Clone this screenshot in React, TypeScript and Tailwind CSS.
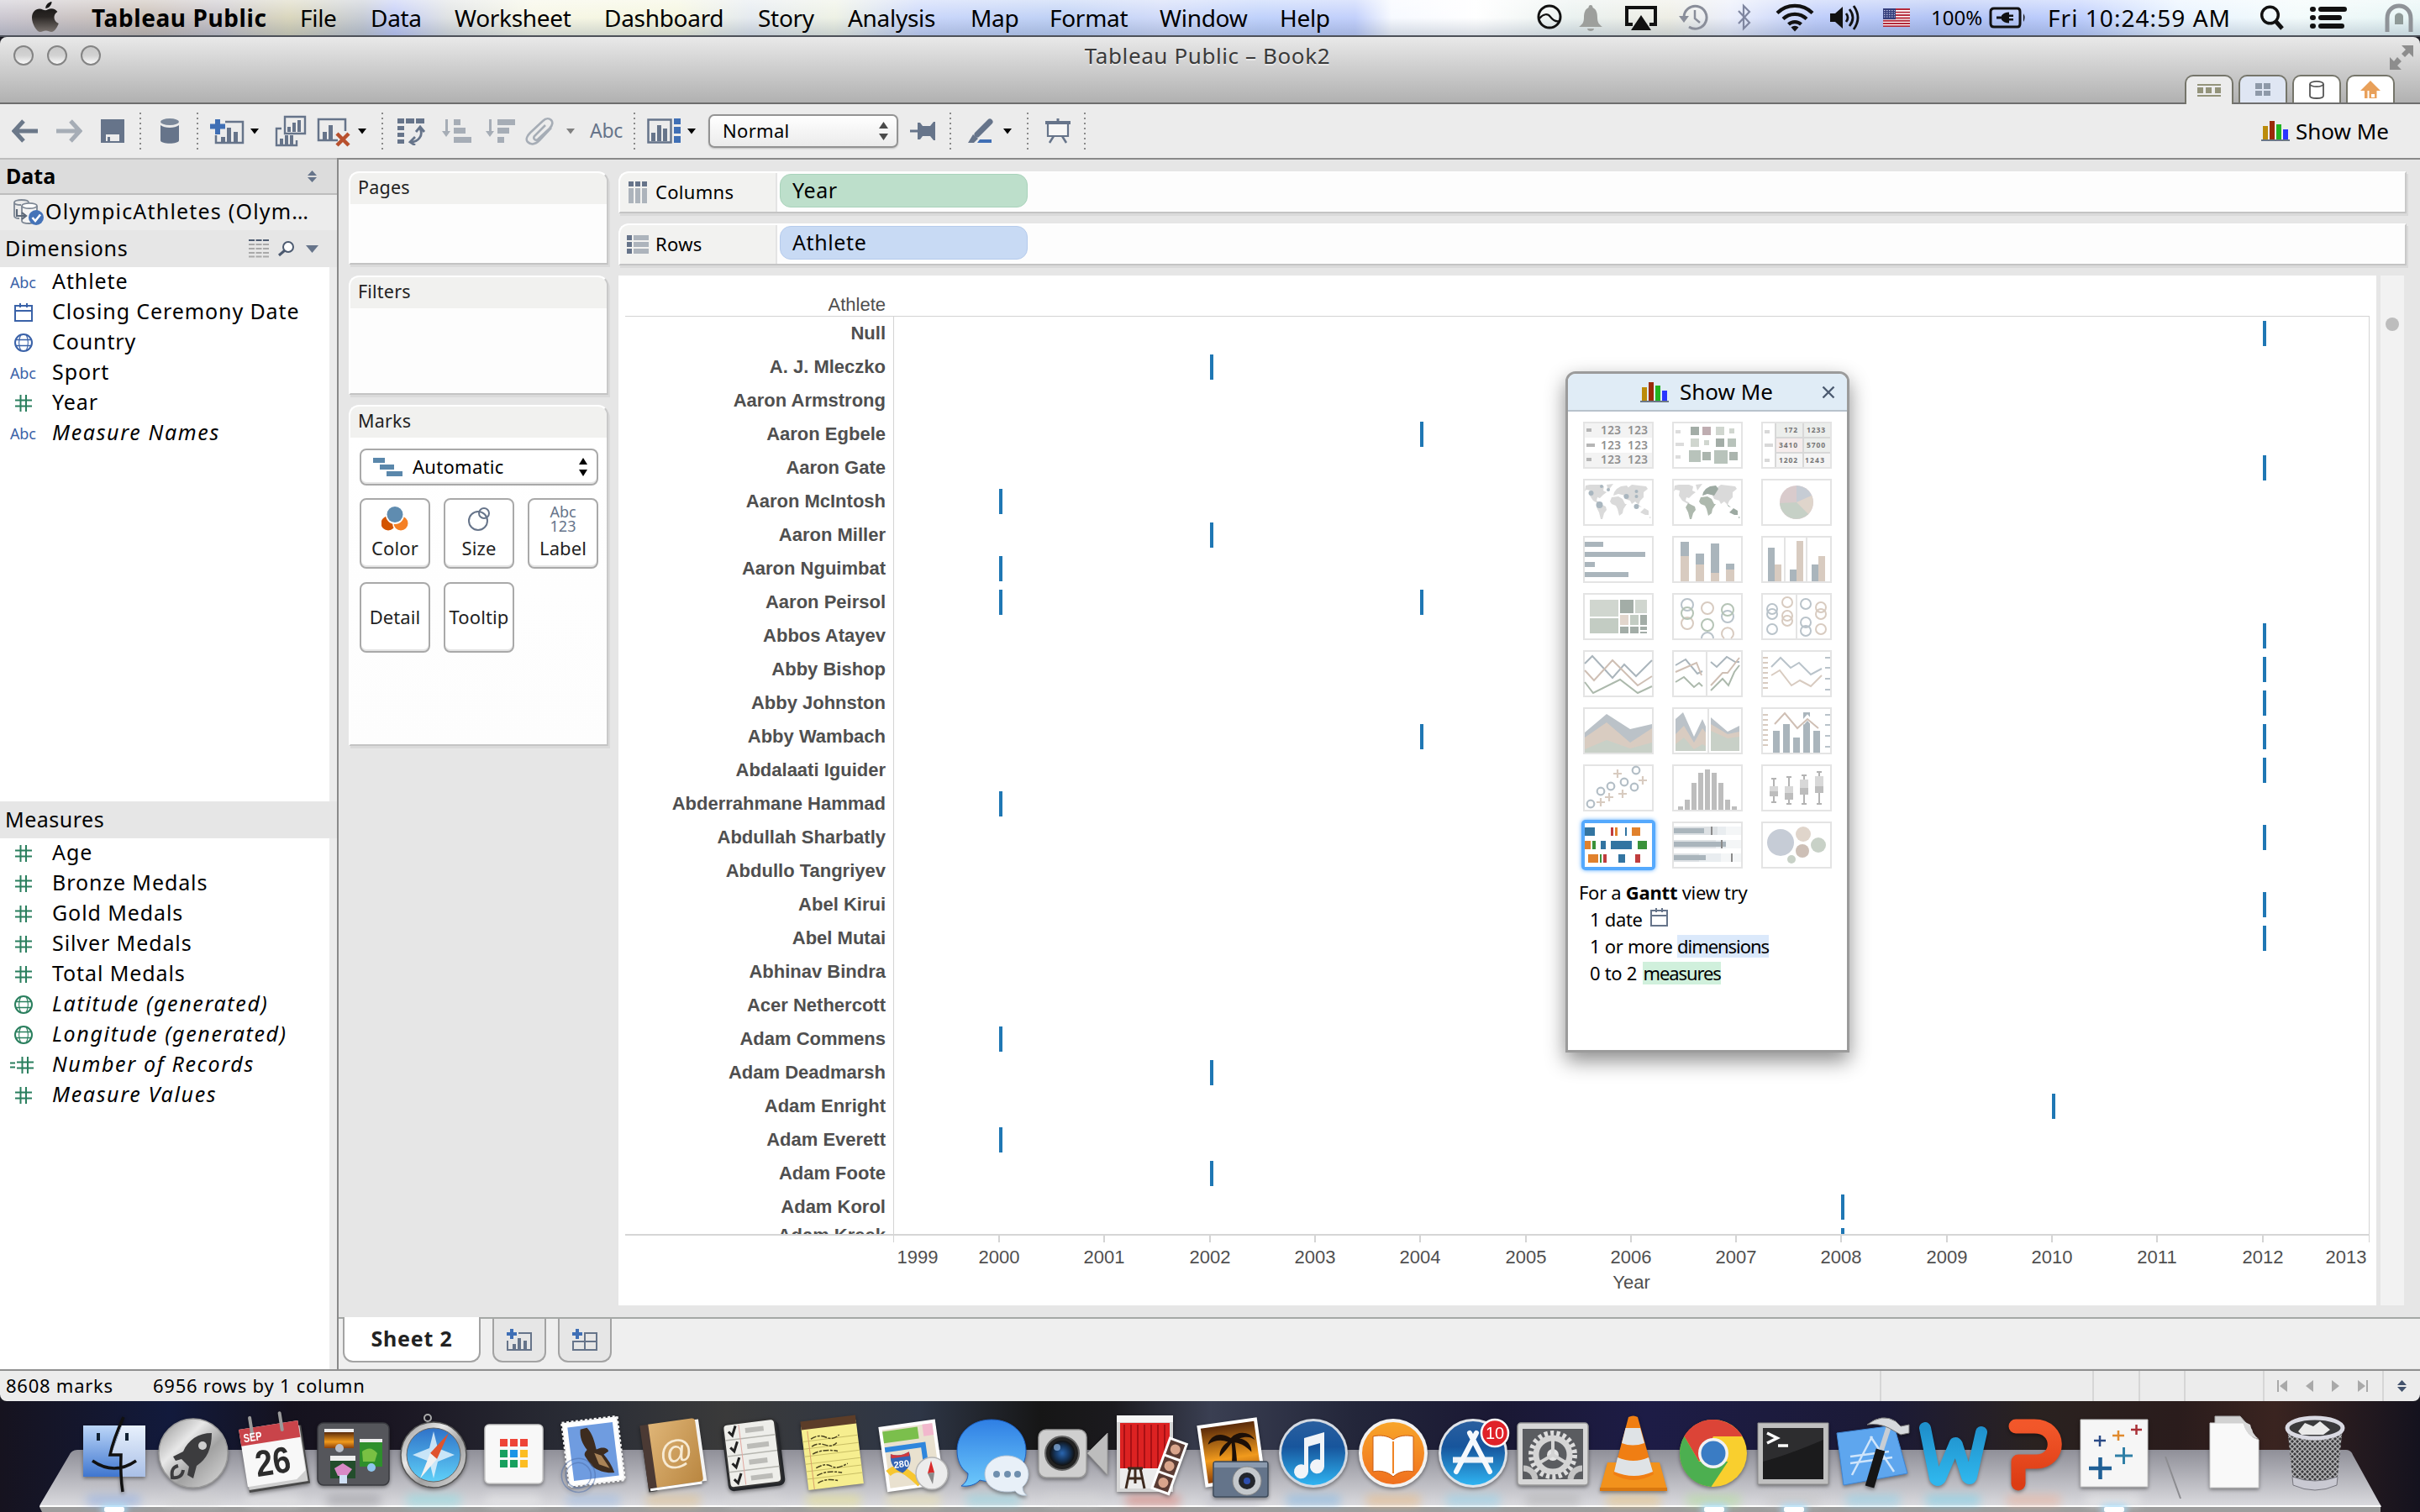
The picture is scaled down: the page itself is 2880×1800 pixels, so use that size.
import React from "react";

/* ------------------------------------------------------------------ data */

const athletes: { name: string; years: number[] }[] = [
  { name: "Null", years: [2012] },
  { name: "A. J. Mleczko", years: [2002] },
  { name: "Aaron Armstrong", years: [] },
  { name: "Aaron Egbele", years: [2004] },
  { name: "Aaron Gate", years: [2012] },
  { name: "Aaron McIntosh", years: [2000] },
  { name: "Aaron Miller", years: [2002] },
  { name: "Aaron Nguimbat", years: [2000] },
  { name: "Aaron Peirsol", years: [2000, 2004] },
  { name: "Abbos Atayev", years: [2012] },
  { name: "Abby Bishop", years: [2012] },
  { name: "Abby Johnston", years: [2012] },
  { name: "Abby Wambach", years: [2004, 2012] },
  { name: "Abdalaati Iguider", years: [2012] },
  { name: "Abderrahmane Hammad", years: [2000] },
  { name: "Abdullah Sharbatly", years: [2012] },
  { name: "Abdullo Tangriyev", years: [] },
  { name: "Abel Kirui", years: [2012] },
  { name: "Abel Mutai", years: [2012] },
  { name: "Abhinav Bindra", years: [] },
  { name: "Acer Nethercott", years: [] },
  { name: "Adam Commens", years: [2000] },
  { name: "Adam Deadmarsh", years: [2002] },
  { name: "Adam Enright", years: [2010] },
  { name: "Adam Everett", years: [2000] },
  { name: "Adam Foote", years: [2002] },
  { name: "Adam Korol", years: [2008] },
];

const yearOffset = (year: number) => Math.round(125 + (year - 2000) * 125.3);

/* ------------------------------------------------------------- menu bar */

const menus: { label: string; width: string }[] = [
  { label: "File", width: "w-[84px]" },
  { label: "Data", width: "w-[100px]" },
  { label: "Worksheet", width: "w-[178px]" },
  { label: "Dashboard", width: "w-[183px]" },
  { label: "Story", width: "w-[107px]" },
  { label: "Analysis", width: "w-[146px]" },
  { label: "Map", width: "w-[94px]" },
  { label: "Format", width: "w-[131px]" },
  { label: "Window", width: "w-[143px]" },
  { label: "Help", width: "w-[80px]" },
];

function MenuBar() {
  return (
    <div className="relative h-[44px] shrink-0 border-b-2 border-[#4c5058] bg-[linear-gradient(90deg,#c6c2cc_0%,#c4b8ae_6%,#c4c0c6_9%,#d6d2b6_12%,#c0c6d0_15%,#bcc6f6_16.3%,#dcdfe0_18.5%,#f6f6e4_22%,#f4f5dc_28%,#e2e8ee_31%,#ecf0e2_34.5%,#c4d2fa_38%,#b8ccf4_44%,#cbd6f8_48%,#b9cdfb_52%,#bccbfb_56%,#f6f9ff_57.5%,#ffffff_61%,#e8f0ee_65%,#ecece2_69%,#e8ecfa_71.5%,#b9c9fa_75%,#aabdf4_80%,#b7c9fd_86%,#e6f2ff_90%,#f2fbfb_95%,#e4f4f4_100%)]">
      <div className="flex h-[42px] items-center bg-gradient-to-b from-white/50 via-white/10 to-slate-500/25 text-[28px] tracking-[-0.3px] text-black">
        <svg className="ml-[37px] mb-[3px]" width="34" height="38" viewBox="0 0 34 38">
          <defs>
            <linearGradient id="apple" x1="0" y1="0" x2="0" y2="1">
              <stop offset="0" stopColor="#111" />
              <stop offset="0.5" stopColor="#2a2624" />
              <stop offset="1" stopColor="#79726e" />
            </linearGradient>
          </defs>
          <path
            fill="url(#apple)"
            d="M24.5 1c.3 3.600-3.200 8-7.200 8C16.800 5.600 20.600 1.300 24.500 1zM17 11.200c1.700 0 4-2 7.200-2 3 0 5.600 1.600 7.200 3.900-5.800 3.400-5 11.500 1.400 14-1.500 4-4.800 10-8.600 10-2.400 0-3.600-1.500-6.600-1.500s-4.300 1.500-6.500 1.500C6.500 37.100 1 27.300 1 20c0-6.800 4.400-10.600 9-10.600 3 0 5.200 1.800 7 1.800z"
          />
        </svg>
        <div className="ml-[38px] w-[248px] font-bold tracking-[0.6px]">Tableau Public</div>
        {menus.map((m) => (
          <div key={m.label} className={m.width}>
            {m.label}
          </div>
        ))}
        <svg className="ml-[226px]" width="30" height="34" viewBox="0 0 30 34">
          <circle cx="15" cy="16" r="13" fill="none" stroke="#111" strokeWidth="3" />
          <path d="M3 18C8 12 13 12 16 16s7 6 11 5" fill="none" stroke="#111" strokeWidth="2.200" />
        </svg>
        <svg className="ml-[20px]" width="28" height="34" viewBox="0 0 28 34">
          <path fill="#9d9f9c" d="M14 2c2 0 2.500 1.500 2.500 3C21 7 22 12 22 17c0 6 2 8 6 11H0c4-3 6-5 6-11 0-5 1-10 5.500-12 0-1.500.5-3 2.500-3zM10 30h8c0 4-8 4-8 0z" />
        </svg>
        <svg className="ml-[26px]" width="40" height="32" viewBox="0 0 40 32">
          <path fill="none" stroke="#111" strokeWidth="4" d="M10 24H3V4h34v20h-7" />
          <path fill="#111" d="M20 13l12 18H8z" />
        </svg>
        <svg className="ml-[25px]" width="36" height="34" viewBox="0 0 36 34">
          <path d="M6 17a13.500 13.500 0 1 1 6 11" fill="none" stroke="#8a8e9a" strokeWidth="3" />
          <path d="M0 15h12l-6 8z" fill="#8a8e9a" />
          <path d="M19 8v10l6 5" fill="none" stroke="#8a8e9a" strokeWidth="2.500" />
        </svg>
        <svg className="ml-[33px]" width="18" height="34" viewBox="0 0 18 34">
          <path d="M2 9l13 14-7 7V3l7 7L2 24" fill="none" stroke="#7f86a0" strokeWidth="2.200" />
        </svg>
        <svg className="ml-[28px]" width="46" height="34" viewBox="0 0 46 34">
          <g fill="none" stroke="#111" strokeWidth="4.200">
            <path d="M2 11.500a30 30 0 0 1 42 0" />
            <path d="M9 18.500a20 20 0 0 1 28 0" />
            <path d="M15.500 25a11 11 0 0 1 15 0" />
          </g>
          <path d="M18.500 28.500a6.500 6.500 0 0 1 9 0L23 33.500z" fill="#111" />
        </svg>
        <svg className="ml-[19px]" width="36" height="34" viewBox="0 0 36 34">
          <path d="M0 12h6l9-8v26l-9-8H0z" fill="#111" />
          <g fill="none" stroke="#111" strokeWidth="2.800">
            <path d="M19 12q4 5 0 10" />
            <path d="M23 7q8 10 0 20" />
            <path d="M28 3q10 14 0 28" />
          </g>
        </svg>
        <svg className="ml-[27px]" width="32" height="22" viewBox="0 0 32 22">
          <path fill="#fff" d="M0 0h32v22H0z" />
          <path stroke="#b52a3a" strokeWidth="1.900" d="M0 1h32M0 4.600h32M0 8h32M0 11.500h32M0 14.800h32M0 18h32M0 21.200h32" />
          <path fill="#353f7c" d="M0 0h15v13H0z" />
          <path stroke="#c8cce8" strokeWidth="1" strokeDasharray="1.500 1.500" d="M1 2.500h13M1 5h13M1 7.500h13M1 10h13" />
        </svg>
        <div className="ml-[25px] w-[69px] text-[24px] tracking-[0px]">100%</div>
        <svg width="44" height="26" viewBox="0 0 44 26">
          <path d="M34 2H6Q2 2 2 6v14q0 4 4 4h28q3 0 3-4V6q0-4-3-4z" fill="none" stroke="#111" strokeWidth="3" />
          <path d="M41 8q3 5 0 10z" fill="#111" />
          <path d="M9 11.500h6v-1q3-4 9-4v3h5v2.500h-5v2h5V16.500h-5v3q-6 0-9-4v-1H9z" fill="#111" />
        </svg>
        <div className="ml-[26px] w-[252px] whitespace-nowrap text-[28px] tracking-[1.05px]">Fri 10:24:59 AM</div>
        <svg width="32" height="32" viewBox="0 0 32 32">
          <circle cx="12.500" cy="13" r="9.800" fill="none" stroke="#111" strokeWidth="3.400" />
          <path d="M19 20l8 9" stroke="#111" strokeWidth="5" />
        </svg>
        <svg className="ml-[28px]" width="44" height="28" viewBox="0 0 44 28">
          <path d="M3 4h1M3 14h1M3 24h1" stroke="#111" strokeWidth="6" strokeLinecap="round" />
          <path d="M13 4h28M13 14h22M13 24h25" stroke="#111" strokeWidth="6" strokeLinecap="round" />
        </svg>
        <svg className="ml-[45px]" width="34" height="34" viewBox="0 0 34 34">
          <path d="M3 34V18C3 -2 31 -2 31 18v16" fill="none" stroke="#8f9398" strokeWidth="5" />
          <path d="M12 25V16c0-6 10-6 10 0v9z" fill="#8f9a98" />
        </svg>
      </div>
    </div>
  );
}

/* ------------------------------------------------------------ title bar */

function WindowTab({ active, tint, children }: { active?: boolean; tint?: boolean; children: React.ReactNode }) {
  return (
    <div
      className={
        "flex w-[58px] items-center justify-center rounded-t-[10px] border-2 border-b-0 border-[#75756a] " +
        (active ? "-mb-[2px] h-[35px] bg-[#ececec]" : tint ? "h-[33px] bg-[#dfe6f3]" : "h-[33px] bg-white")
      }
    >
      {children}
    </div>
  );
}

function TitleBar() {
  return (
    <div className="relative h-[80px] shrink-0 rounded-t-[8px] border-b-2 border-[#6e6e6e] bg-gradient-to-b from-[#e9e9e9] to-[#b1b1b1]">
      <div className="flex gap-4 pt-[10px] pl-[16px]">
        {[0, 1, 2].map((i) => (
          <div key={i} className="h-[24px] w-[24px] rounded-full border-2 border-[#848484] bg-gradient-to-b from-[#c9c9c9] via-[#d2d2d2] to-[#fafafa]" />
        ))}
      </div>
      <div className="absolute inset-x-0 top-[4px] text-center text-[26px] leading-[36px] tracking-[0.6px] text-[#3a3a3a] [text-shadow:0_2px_0_rgba(255,255,255,.5)]">
        <span className="relative -left-[3px]">Tableau Public – Book2</span>
      </div>
      <svg className="absolute top-[9px] right-[7px]" width="30" height="30" viewBox="0 0 30 30">
        <path fill="#8d8d8d" d="M15 1h14v14l-5-5-5 5-4-4 5-5zM1 15l5 5 4-5 5 5-5 5 5 5H1z" />
      </svg>
      <div className="absolute right-[30px] bottom-0 flex items-end gap-[6px]">
        <WindowTab active>
          <svg width="28" height="16" viewBox="0 0 28 16">
            <path fill="#93937a" d="M0 0h28v2H0zM0 4h7v7H0zM10 4h7v7h-7zM21 4h7v7h-7zM0 13h28v2H0z" />
          </svg>
        </WindowTab>
        <WindowTab tint>
          <svg width="18" height="16" viewBox="0 0 18 16">
            <path fill="#8e99a8" d="M0 0h8v7H0zM10 0h8v7h-8zM0 9h8v6H0zM10 9h8v6h-8z" />
          </svg>
        </WindowTab>
        <WindowTab>
          <svg width="20" height="24" viewBox="0 0 20 24">
            <path d="M2 5v14c0 4 16 4 16 0V5" fill="#fff" stroke="#555" strokeWidth="1.800" />
            <ellipse cx="10" cy="5" rx="8" ry="3.200" fill="#fff" stroke="#555" strokeWidth="1.800" />
          </svg>
        </WindowTab>
        <WindowTab>
          <svg width="24" height="22" viewBox="0 0 24 22">
            <path fill="#e8a05a" d="M12 0l12 12H0zM5 11h3.500v10H5zM10.500 11h9v10h-9z" />
            <path fill="#fff" d="M13 16h4v4h-4z" />
          </svg>
        </WindowTab>
      </div>
    </div>
  );
}

/* -------------------------------------------------------------- toolbar */

const Sep = ({ className }: { className: string }) => (
  <div className={"h-[44px] w-[2px] bg-[repeating-linear-gradient(180deg,#8a8a8a_0_2px,transparent_2px_6px)] " + className} />
);
const Down = ({ className, fill = "#000" }: { className: string; fill?: string }) => (
  <svg className={className} width="12" height="8" viewBox="0 0 12 8">
    <path d="M1 1h10L6 7.500z" fill={fill} />
  </svg>
);

function BarsLogo({ className }: { className?: string }) {
  return (
    <svg className={className} width="34" height="24" viewBox="0 0 34 24">
      <path fill="#bb8b0a" d="M2 6h6v16H2z" />
      <path fill="#9b2b08" d="M10 0h6v22h-6z" />
      <path fill="#22b422" d="M18 4h6v18h-6z" />
      <path fill="#2a36ff" d="M26 10h6v12h-6z" />
      <path fill="#6b7787" d="M0 22h34v2H0z" />
    </svg>
  );
}

function Toolbar() {
  return (
    <div className="flex h-[64px] shrink-0 items-center bg-[#ececec]">
      <svg className="ml-[14px]" width="32" height="28" viewBox="0 0 32 28">
        <path d="M14 2L3 14l11 12M3 14h28" fill="none" stroke="#6b7889" strokeWidth="5" />
      </svg>
      <svg className="ml-[20px]" width="32" height="28" viewBox="0 0 32 28">
        <path d="M18 2l11 12-11 12M29 14H1" fill="none" stroke="#a6adb6" strokeWidth="5" />
      </svg>
      <svg className="ml-[21px]" width="30" height="28" viewBox="0 0 30 28">
        <path fill="#66748a" d="M1 0h28v28H1z" />
        <path fill="#ececec" d="M7 18h16v8H12v-5H9v5H7z" />
      </svg>
      <Sep className="ml-[17px]" />
      <svg className="ml-[22px]" width="24" height="32" viewBox="0 0 24 32">
        <path fill="#66748a" d="M1 9c5 4 17 4 22 0v18c0 5-22 5-22 0z" />
        <ellipse cx="12" cy="5" rx="11" ry="4" fill="#7a8799" />
      </svg>
      <Sep className="ml-[20px]" />
      <svg className="ml-[14px]" width="42" height="34" viewBox="0 0 42 34">
        <path d="M18 6h21v25H7V22" fill="none" stroke="#66748a" strokeWidth="2.500" />
        <path fill="#66748a" d="M13 24h5v7h-5zM20 13h5v18h-5zM28 18h5v13h-5z" />
        <path d="M9 3v18M0 11.500h18" stroke="#3f6fb5" strokeWidth="6" />
      </svg>
      <Down className="ml-[5px]" />
      <svg className="ml-[18px]" width="38" height="38" viewBox="0 0 38 38">
        <path d="M8 16H2v20h24v-6M12 2h24v20H12z" fill="none" stroke="#66748a" strokeWidth="2.400" />
        <path fill="#66748a" d="M15 14h4v6h-4zM21 9h4v11h-4zM27 6h4v14h-4zM6 28h4v7H6zM12 24h4v11h-4zM18 24h4v11h-4z" />
      </svg>
      <svg className="ml-[12px]" width="40" height="38" viewBox="0 0 40 38">
        <path d="M25 30H2V5h32v14" fill="none" stroke="#66748a" strokeWidth="2.500" />
        <path fill="#66748a" d="M7 20h5v9H7zM14 12h5v17h-5z" />
        <path d="M24 22l14 14M38 22L24 36" stroke="#b8502d" strokeWidth="4.500" />
      </svg>
      <Down className="ml-[8px]" />
      <Sep className="ml-[17px]" />
      <svg className="ml-[16px]" width="36" height="34" viewBox="0 0 36 34">
        <path fill="#66748a" d="M1 2h8v6H1zM11 2h10v6H11zM23 2h10v6H23zM1 11h8v5H1zM1 19h8v5H1zM1 27h8v5H1z" />
        <path d="M28 14c4 8-2 16-11 16M22 24l-6 6 6 4M23 18l5-6 5 6" fill="none" stroke="#66748a" strokeWidth="2.800" />
      </svg>
      <svg className="ml-[17px]" width="36" height="34" viewBox="0 0 36 34">
        <path fill="#a6adb6" d="M5 3h3v14h3l-5 7-5-7h4zM15 3h8v7h-8zM15 13h14v7H15zM15 24h21v7H15z" />
      </svg>
      <svg className="ml-[16px]" width="36" height="34" viewBox="0 0 36 34">
        <path fill="#a6adb6" d="M5 3h3v14h3l-5 7-5-7h4zM15 3h21v7H15zM15 13h14v7H15zM15 24h8v7h-8z" />
      </svg>
      <svg className="ml-[12px]" width="36" height="34" viewBox="0 0 36 34">
        <path d="M31 13L17 28c-6 6-11 5-14 2s0-8 3-11L21 5c4-4 8-3 10-1s2 6-2 10L15 27c-3 2-6-1-4-4L24 10" fill="none" stroke="#a6adb6" strokeWidth="2.600" />
      </svg>
      <Down className="ml-[12px]" fill="#808080" />
      <div className="ml-[17px] w-[40px] pb-[2px] text-[23px] tracking-[-0.3px] text-[#66748a]">Abc</div>
      <Sep className="ml-[12px]" />
      <svg className="ml-[14px]" width="40" height="30" viewBox="0 0 40 30">
        <path d="M1.500 1.500h27v27h-27z" fill="none" stroke="#66748a" strokeWidth="2.500" />
        <path fill="#66748a" d="M5 17h5v10H5zM12 8h5v19h-5zM19 12h5v15h-5z" />
        <path fill="#3f6fb5" d="M32 0h8v7h-8zM32 10h8v8h-8zM32 21h8v8h-8z" />
      </svg>
      <Down className="ml-[7px]" />
      <div className="ml-[14px] flex h-[40px] w-[226px] items-center justify-between rounded-[7px] border-2 border-[#939393] bg-gradient-to-b from-white to-[#ebebeb] pr-[10px] pl-[15px] shadow-[0_1px_2px_rgba(0,0,0,.2)]">
        <span className="pb-[2px] text-[22px] tracking-[0.3px] text-black">Normal</span>
        <svg width="11" height="22" viewBox="0 0 11 22">
          <path d="M5.500 0L11 8H0zM0 14h11l-5.500 8z" fill="#4a4a4a" />
        </svg>
      </div>
      <svg className="ml-[14px]" width="32" height="24" viewBox="0 0 32 24">
        <path fill="#66748a" d="M0 10.500h9V2h3l3 4h9l4-5h2v22h-2l-4-5h-9l-3 4H9v-8.500H0z" />
      </svg>
      <Sep className="ml-[15px]" />
      <svg className="ml-[19px]" width="32" height="30" viewBox="0 0 32 30">
        <path d="M27 4L12 19" stroke="#66748a" strokeWidth="7" strokeLinecap="round" />
        <path d="M7 19l6 5-5 5H1z" fill="#66748a" />
        <path d="M15 25h14v4H12z" fill="#3f6fb5" />
      </svg>
      <Down className="ml-[10px]" />
      <Sep className="ml-[17px]" />
      <svg className="ml-[18px]" width="34" height="30" viewBox="0 0 34 30">
        <path d="M5 6h24v15H5z" fill="#f6f6f6" stroke="#66748a" strokeWidth="2.200" />
        <path fill="#66748a" d="M2 3h30v4H2zM15.500 0h3v4h-3z" />
        <path d="M12 21l-5 8M22 21l5 8" stroke="#66748a" strokeWidth="2.500" />
      </svg>
      <Sep className="ml-[14px]" />
      <BarsLogo className="ml-auto" />
      <div className="mr-[36px] ml-[7px] w-[112px] text-[26px] tracking-[0px] whitespace-nowrap text-black">Show Me</div>
    </div>
  );
}

/* ------------------------------------------------------------ data pane */

type FieldKind = "abc" | "date" | "geo" | "num" | "calc";

function FieldIcon({ kind, color }: { kind: FieldKind; color: string }) {
  if (kind === "abc") return <span className="text-[18px] tracking-[-0.2px] text-[#3a62a8]">Abc</span>;
  return (
    <svg width="32" height="24" viewBox="0 0 32 24" fill="none" stroke={color}>
      {kind === "date" && <path strokeWidth="2" d="M6 4h20v18H6zM6 10h20M12 1v5M20 1v5" />}
      {kind === "geo" && (
        <g>
          <circle cx="16" cy="12" r="10" strokeWidth="2" />
          <path strokeWidth="1.300" d="M6 8.500h20M6 15.500h20M13 2c-3 6-3 14 0 20M19 2c3 6 3 14 0 20" />
        </g>
      )}
      {kind === "num" && <path strokeWidth="2" d="M6 8.500h20M6 15.500h20M12.500 2v20M19 2v20" />}
      {kind === "calc" && <path strokeWidth="2" d="M8 8.500h20M8 15.500h20M14.500 2v20M21 2v20M0 9.500h6M0 14.500h6" />}
    </svg>
  );
}

const dimensions: { kind: FieldKind; label: string; italic?: boolean }[] = [
  { kind: "abc", label: "Athlete" },
  { kind: "date", label: "Closing Ceremony Date" },
  { kind: "geo", label: "Country" },
  { kind: "abc", label: "Sport" },
  { kind: "num", label: "Year" },
  { kind: "abc", label: "Measure Names", italic: true },
];
const measures: { kind: FieldKind; label: string; italic?: boolean }[] = [
  { kind: "num", label: "Age" },
  { kind: "num", label: "Bronze Medals" },
  { kind: "num", label: "Gold Medals" },
  { kind: "num", label: "Silver Medals" },
  { kind: "num", label: "Total Medals" },
  { kind: "geo", label: "Latitude (generated)", italic: true },
  { kind: "geo", label: "Longitude (generated)", italic: true },
  { kind: "calc", label: "Number of Records", italic: true },
  { kind: "num", label: "Measure Values", italic: true },
];

function FieldList({ fields, geoColor }: { fields: typeof dimensions; geoColor: string }) {
  return (
    <div>
      {fields.map((f) => (
        <div key={f.label} className="flex h-[36px] items-center">
          <div className="ml-[12px] flex w-[50px] items-center">
            <FieldIcon kind={f.kind} color={f.kind === "geo" || f.kind === "date" ? geoColor : "#2a7f5e"} />
          </div>
          <span
            className={
              "pb-[3px] text-[25px] leading-[33px] whitespace-nowrap text-black " + (f.italic ? "tracking-[1.65px] italic" : "tracking-[0.9px]")
            }
          >
            {f.label}
          </span>
        </div>
      ))}
    </div>
  );
}

function DataPane() {
  return (
    <div className="flex w-[401px] shrink-0 flex-col bg-[#ececec]">
      <div className="flex h-[44px] items-center justify-between border-y-2 border-[#bdbdbd] bg-[#dcdcdc] pr-[24px] pl-[7px]">
        <span className="pb-[1px] text-[25px] font-bold text-black">Data</span>
        <svg width="11" height="14" viewBox="0 0 11 14">
          <path d="M5.500 0L11 6H0zM0 8h11l-5.500 6z" fill="#66748a" />
        </svg>
      </div>
      <div className="flex h-[42px] items-center pl-[15px]">
        <svg width="38" height="32" viewBox="0 0 38 32">
          <g fill="none" stroke="#7d8794" strokeWidth="1.800">
            <path d="M8 23C4 23 2 22 2 20V4M2 4c0-4 17-4 17 0M2 4c0 3 8 3 8 3" />
            <path d="M11 8v18c0 4 18 4 18 0V8" fill="#f4f4f4" />
            <ellipse cx="20" cy="8" rx="9" ry="3.200" fill="#fff" />
            <path d="M5 12v8h10M11 16l5 4-5 4" stroke="#5c6878" strokeWidth="2.200" />
          </g>
          <circle cx="28" cy="22" r="9" fill="#4573b8" />
          <path d="M23.500 22l3.500 4 6-7.500" fill="none" stroke="#fff" strokeWidth="2.600" />
        </svg>
        <span className="ml-[1px] pb-[2px] text-[25px] tracking-[1.2px] whitespace-nowrap text-black">OlympicAthletes (Olym…</span>
      </div>
      <div className="flex h-[44px] items-center bg-[#e6e6e6] pl-[6px]">
        <span className="w-[290px] text-[25px] tracking-[0.8px] text-black">Dimensions</span>
        <svg width="24" height="22" viewBox="0 0 24 22">
          <path d="M0 1h24" stroke="#4c5a70" strokeWidth="2" strokeDasharray="7 1.500" />
          <path d="M0 6h24M0 11h24M0 16h24M0 20.500h24" stroke="#a9a9a9" strokeWidth="1.800" strokeDasharray="7 1.500" />
        </svg>
        <svg className="ml-[11px]" width="20" height="20" viewBox="0 0 20 20">
          <circle cx="12" cy="8" r="6" fill="#fff" stroke="#4c5a70" strokeWidth="2" />
          <path d="M8 12l-7 6" stroke="#4c5a70" strokeWidth="3" />
        </svg>
        <svg className="ml-[13px]" width="15" height="9" viewBox="0 0 15 9">
          <path d="M0 0h15L7.500 9z" fill="#66748a" />
        </svg>
      </div>
      <div className="mr-[9px] h-[636px] bg-white">
        <FieldList fields={dimensions} geoColor="#3a62a8" />
      </div>
      <div className="flex h-[44px] items-center bg-[#e6e6e6] pl-[6px] text-[25px] tracking-[0.5px] text-black">Measures</div>
      <div className="mr-[9px] grow bg-white">
        <FieldList fields={measures} geoColor="#2a7f5e" />
      </div>
    </div>
  );
}

/* ---------------------------------------------------------------- cards */

function Card({ title, className, children }: { title: string; className: string; children?: React.ReactNode }) {
  return (
    <div className={"flex w-[309px] flex-col rounded-tl-[12px] rounded-tr-[12px] border-2 border-t-white border-r-[#c9c9c9] border-b-[#c4c4c4] border-l-white bg-[#fdfdfd] shadow-[2px_3px_0_rgba(0,0,0,.05)] " + className}>
      <div className="flex h-[37px] shrink-0 items-center rounded-t-[10px] bg-[#f1f1ef] pb-[2px] pl-[9px] text-[21.500px] tracking-[0.2px] text-[#222]">{title}</div>
      {children}
    </div>
  );
}

function MarkButton({ label, children }: { label: string; children?: React.ReactNode }) {
  return (
    <div className="flex h-[84px] w-[84px] flex-col items-center justify-center rounded-[8px] border-2 border-[#a9a9a9] bg-white shadow-[inset_0_-2px_0_#e4e4e4]">
      {children && <div className="flex h-[36px] items-center">{children}</div>}
      <span className="pb-[2px] text-[22px] leading-[32px] tracking-[0.1px] whitespace-nowrap text-[#222]">{label}</span>
    </div>
  );
}

function MarksCard() {
  return (
    <Card title="Marks" className="mt-[12px] h-[406px]">
      <div className="grow bg-[linear-gradient(180deg,#fff_0,#fdfdfd_100%)] pt-[13px] pl-[11px]">
        <div className="flex h-[44px] w-[284px] items-center rounded-[8px] border-2 border-[#a9a9a9] bg-white pr-[11px] pl-[14px] shadow-[inset_0_-2px_0_#e4e4e4]">
          <svg width="35" height="23" viewBox="0 0 35 23">
            <path fill="#5a87ab" d="M0 0h14v6H0zM8 8h17v6H8zM16 16h19v6H16z" />
          </svg>
          <span className="ml-[12px] grow pb-[1px] text-[22px] tracking-[0.3px] text-black">Automatic</span>
          <svg width="10" height="22" viewBox="0 0 10 22">
            <path d="M5 0l5 8H0zM0 14h10l-5 8z" fill="#000" />
          </svg>
        </div>
        <div className="mt-[15px] grid w-[284px] grid-cols-3 gap-4">
          <MarkButton label="Color">
            <svg width="32" height="30" viewBox="0 0 32 30">
              <circle cx="8" cy="20" r="8.500" fill="#d35400" />
              <circle cx="23" cy="20" r="10" fill="#fff" />
              <circle cx="23" cy="20" r="8.500" fill="#f58025" />
              <circle cx="16" cy="10" r="11" fill="#fff" />
              <circle cx="16" cy="9.500" r="9.500" fill="#5f8cb0" />
            </svg>
          </MarkButton>
          <MarkButton label="Size">
            <svg width="28" height="30" viewBox="0 0 28 30" fill="none" stroke="#66748a" strokeWidth="2">
              <circle cx="13" cy="17" r="11" />
              <circle cx="20" cy="8" r="6" />
            </svg>
          </MarkButton>
          <MarkButton label="Label">
            <div className="flex flex-col items-center text-[18px] text-[#66748a]">
              <span className="block h-[17px] leading-[17px]">Abc</span>
              <span className="block h-[17px] leading-[17px]">123</span>
            </div>
          </MarkButton>
          <MarkButton label="Detail" />
          <MarkButton label="Tooltip" />
        </div>
      </div>
    </Card>
  );
}

/* -------------------------------------------------------------- shelves */

function Shelf({ label, pill, green, icon }: { label: string; pill: string; green?: boolean; icon: React.ReactNode }) {
  return (
    <div className="flex h-[50px] rounded-tl-[12px] border-2 border-t-white border-r-[#c9c9c9] border-b-[#c4c4c4] border-l-white bg-[#fdfdfd] shadow-[2px_3px_0_rgba(0,0,0,.05)]">
      <div className="flex w-[187px] items-center rounded-tl-[10px] border-r-2 border-[#e4e4e4] bg-[#f2f2f0] pl-[8px]">
        {icon}
        <span className="ml-[8px] pb-[2px] text-[22px] tracking-[0.3px] text-black">{label}</span>
      </div>
      <div
        className={
          "mt-[1px] ml-[3px] flex h-[40px] w-[295px] items-center rounded-[13px] border pb-[1px] pl-[14px] text-[25px] tracking-[0.6px] text-black " +
          (green ? "border-[#a9d3bb] bg-[#bddfcb]" : "border-[#b5cbec] bg-[#c8daf4]")
        }
      >
        {pill}
      </div>
    </div>
  );
}

/* ---------------------------------------------------------------- chart */

function Chart() {
  return (
    <div className="flex h-[1226px] w-[2092px] flex-col bg-white pl-[8px] font-['Liberation_Sans',Arial,sans-serif] text-[22px] text-[#4f4f4f]">
      <div className="flex h-[49px] w-[2076px] border-b border-[#d4d4d4]">
        <div className="w-[310px] pt-[22px] text-right leading-[26px]">Athlete</div>
      </div>
      <div className="h-[1092px] w-[2076px] border-r border-[#d4d4d4]">
        {athletes.map((a) => (
          <div key={a.name} className="flex h-[40px] items-center">
            <div className="w-[310px] text-right leading-[40px] font-bold whitespace-nowrap">{a.name}</div>
            <div className="relative ml-[9px] h-[40px] grow border-l border-[#d4d4d4]">
              {a.years.map((y) => (
                <div key={y} className="absolute top-[5px] h-[30px] w-[4px] bg-[#1f77b4]" style={{ left: yearOffset(y) }} />
              ))}
            </div>
          </div>
        ))}
        <div className="flex h-[12px]">
          <div className="h-[14px] w-[310px] overflow-hidden text-right leading-[28px] font-bold">Adam Kreek</div>
          <div className="relative ml-[9px] grow border-l border-[#d4d4d4]">
            <div className="absolute top-[5px] h-[7px] w-[4px] bg-[#1f77b4]" style={{ left: yearOffset(2008) }} />
          </div>
        </div>
      </div>
      <div className="h-[2px] w-[2076px] bg-[#d6d6d6]" />
      <div className="relative ml-[319px] h-[44px] w-[1757px]">
        <div className="absolute top-0 left-0 h-[8px] w-[1px] bg-[#d4d4d4]" />
        <div className="absolute top-0 right-0 h-[8px] w-[1px] bg-[#d4d4d4]" />
        {Array.from({ length: 13 }, (_, i) => 2000 + i).map((y) => (
          <div key={y} className="absolute top-0 h-[8px] w-[2px] bg-[#d4d4d4]" style={{ left: yearOffset(y) }} />
        ))}
        {Array.from({ length: 15 }, (_, i) => 1999 + i).map((y) => (
          <div
            key={y}
            className="absolute top-[13px] w-[60px] text-center leading-[26px]"
            style={{ left: (y === 1999 ? 29 : y === 2013 ? 1729 : yearOffset(y) + 1) - 30 }}
          >
            {y}
          </div>
        ))}
      </div>
      <div className="ml-[319px] w-[1757px] text-center leading-[24px]">Year</div>
    </div>
  );
}

/* -------------------------------------------------------------- show me */

const B = "#aab5bc";
const T = "#d8cbc0";
const G = "#c8d0c7";

const landWest = "M3 8l5-1 12 0 5 2-1 5 4 2-4 3-4 4-3-1-1 4 5 3-2 1-7-4-4-6 1-6-5-1-2 2zM28 7l8-1-3 4-3 4z";
const southAmerica = "M19 29l8 4 1 4-3 4-2 7h-2l-2-8-3-6z";
const africa = "M34 22l8-1 5 3 3 6h2l-4 6-1 5-4 3-2-8-2-4-5-2-2-3z";
const europe = "M36 20l1-4 3-4 5-3 7-1 3 4-5 8-4-1-4-1z";
const asia = "M54 10l4-3 17 2 2 3-5 4v6l-4 4-2 5-4-4-4 3-2-4-6-2-2-4z";
const oceania = "M68 40l5-5 5 3v5h-4zM65 30l2 3 3 1M79 45l2 1-2 1z";

const thumbs: React.ReactNode[] = [
  <g key="text">
    <path fill="#f3f3f3" d="M2 2h80v17H2zM2 37h80v17H2z" />
    <path fill="#b5b5b5" d="M4 8h6v4H4zM4 26h10v4H4zM4 43h6v4H4z" />
    <g fill="#8f8f8f" fontSize="13.500" fontFamily="Noto Sans" fontWeight="600">
      {[15, 33, 50].map((y) => (
        <g key={y}>
          <text x="21" y={y} textLength="24">123</text>
          <text x="53" y={y} textLength="24">123</text>
        </g>
      ))}
    </g>
  </g>,
  <g key="heat">
    <path fill="#dcdcdc" d="M4 10h6v4H4zM4 25h10v4H4zM4 40h6v4H4z" />
    <path fill="#a3ada7" d="M22 6h10v10H22zM52 20h10v10H52z" />
    <path fill="#bfadb1" d="M36 6h10v10H36z" />
    <path fill="#d0d6cf" d="M52 6h10v10H52zM68 8h6v6h-6zM22 20h10v10H22zM38 22h6v6h-6z" />
    <path fill="#b8c3bb" d="M66 20h10v10H66zM20 34h14v14H20zM50 34h16v16H50z" />
    <path fill="#abb5ae" d="M36 36h10v10H36zM68 36h10v10H68z" />
  </g>,
  <g key="highlight">
    <path fill="#d8d8d8" d="M4 10h6v4H4zM4 26h10v4H4zM4 44h6v4H4zM16 2h66v52H16z" />
    <path fill="#eceeec" d="M18 2h31v16H18zM51 2h31v16H51zM51 20h31v16H51z" />
    <path fill="#f5ecec" d="M18 20h31v16H18z" />
    <path fill="#f4f4f4" d="M18 38h31v16H18zM51 38h31v16H51z" />
    <g fill="#757575" fontSize="8.500" fontFamily="Noto Sans" fontWeight="700">
      <text x="27" y="13" textLength="16">172</text>
      <text x="54" y="13" textLength="22">1233</text>
      <text x="21" y="31" textLength="22">3410</text>
      <text x="54" y="31" textLength="22">5700</text>
      <text x="21" y="49" textLength="22">1202</text>
      <text x="52" y="49" textLength="23">1243</text>
    </g>
  </g>,
  <g key="symbolmap">
    <path fill="#dadada" d={landWest + southAmerica + africa + europe + asia + oceania} />
    <g fill="#a9b6bf">
      <circle cx="9.500" cy="17" r="3" />
      <circle cx="22" cy="9" r="2" />
      <circle cx="30" cy="13" r="2" />
      <circle cx="19.500" cy="31" r="4" />
      <circle cx="51.500" cy="21" r="3" />
      <circle cx="63.500" cy="15" r="2" />
      <circle cx="63.500" cy="21" r="2" />
      <circle cx="63.500" cy="33" r="3" />
    </g>
  </g>,
  <g key="filledmap">
    <path fill="#dadada" d={landWest + asia} />
    <path fill="#aeb9ae" d={southAmerica + africa} />
    <path fill="#9daaa2" d={europe + oceania} />
  </g>,
  <g key="pie">
    <circle cx="42" cy="28" r="20" fill="#d9cbcc" />
    <path fill="#c6ccd4" d="M42 28V8a20 20 0 0 1 18 12z" />
    <path fill="#dfd5cb" d="M42 28l18-8a20 20 0 0 1-4 22z" />
    <path fill="#c6d0c6" d="M42 28l14 14a20 20 0 0 1-34-13z" />
  </g>,
  <path key="hbars" fill={B} d="M2 7h22v6H2zM2 19h72v6H2zM2 31h12v6H2zM2 43h52v6H2z" />,
  <g key="stacked">
    <path fill={B} d="M10 7h10v17H10zM28 21h10v13H28zM46 9h10v35H46zM64 33h10v7H64z" />
    <path fill={T} d="M10 24h10v30H10zM28 34h10v20H28zM46 44h10v10H46zM64 40h10v14H64z" />
  </g>,
  <g key="side">
    <path fill="#e4e4e4" d="M27 2h2v52h-2zM53 2h2v52h-2z" />
    <path fill={B} d="M8 14h8v40H8zM34 40h8v14h-8zM60 34h8v20h-8z" />
    <path fill={T} d="M16 34h8v20h-8zM42 6h8v48h-8zM68 24h8v30h-8z" />
  </g>,
  <g key="treemap">
    <path fill="#d0d6cf" d="M8 8h34v20H8zM62 8h14v16H62z" />
    <path fill="#c3ccc3" d="M8 30h34v18H8zM56 26h10v12H56z" />
    <path fill="#a3ada7" d="M44 8h16v16H44zM68 26h8v12h-8zM44 40h10v8H44zM56 40h10v8H56zM68 40h8v4h-8zM68 46h8v2h-8z" />
    <path fill="#e2d6cd" d="M44 26h10v12H44z" />
  </g>,
  <g key="circles" fill="none" strokeWidth="2">
    <circle cx="18" cy="36" r="7" stroke={T} />
    <circle cx="18" cy="14" r="7" stroke="#b9c3ca" />
    <circle cx="18" cy="24" r="7" stroke="#b5c4b6" />
    <circle cx="42" cy="18" r="7" stroke={T} />
    <circle cx="42" cy="38" r="7" stroke="#b5c4b6" />
    <path d="M35 54a7 7 0 0 1 14 0" stroke="#b9c3ca" />
    <circle cx="66" cy="28" r="7" stroke="#b9c3ca" />
    <circle cx="66" cy="20" r="7" stroke="#b5c4b6" />
    <path d="M62 54a7 7 0 1 1 8 0" stroke={T} />
  </g>,
  <g key="sidecircles" fill="none" strokeWidth="2">
    <path d="M42 2v52" stroke="#e4e4e4" />
    <g stroke="#b9c3ca">
      <circle cx="13" cy="19" r="6" />
      <circle cx="13" cy="25" r="6" />
      <circle cx="13" cy="43" r="6" />
      <circle cx="53" cy="13" r="6" />
      <circle cx="53" cy="35" r="6" />
      <circle cx="53" cy="45" r="6" />
    </g>
    <g stroke={T}>
      <circle cx="31" cy="11" r="6" />
      <circle cx="31" cy="27" r="6" />
      <circle cx="31" cy="33" r="6" />
      <circle cx="71" cy="17" r="6" />
      <circle cx="71" cy="25" r="6" />
      <circle cx="71" cy="43" r="6" />
    </g>
  </g>,
  <g key="lines" fill="none" strokeWidth="2">
    <path stroke={B} d="M2 16l9-9 24 26 14-16 14 14 19-19" />
    <path stroke="#cfbfb4" d="M2 24l11 12 22-24 30 30 17-11" />
    <path stroke="#acb9ac" d="M2 38l10 13 32-16 21 16 17-8" />
  </g>,
  <g key="dlines" fill="none" strokeWidth="2">
    <path d="M41 2v52" stroke="#e4e4e4" />
    <path stroke={B} d="M4 18l12-7 14 17 6-3M46 14l7 6 12-12 10 6h5" />
    <path stroke="#cfbfb4" d="M4 26l25-11 6 15M46 42l14-15h6L80 9" />
    <path stroke="#acb9ac" d="M4 38l10-6 12 12 6-5 4 4M46 48l14-14 7 8 7-16 6-8" />
  </g>,
  <g key="duallines" fill="none" strokeWidth="2">
    <path stroke={T} d="M2 9h6M2 15h6M2 21h6M2 27h6M2 33h6M2 39h6M2 45h6" />
    <path stroke="#b9c3ca" d="M76 9h6M76 21h6M76 34h6M76 47h6" />
    <path stroke="#b9c3ca" d="M12 20L23 9l12 12 10-6 14 14 13-7" />
    <path stroke={T} d="M12 30l10-6 14 18 10-6 13 7 13-13" />
  </g>,
  <g key="area">
    <path fill="#bbc2c8" d="M2 30L28 8l28 18 26-6v34H2z" />
    <path fill="#d9ccc1" d="M2 36l26-18 28 24 26-17v29H2z" />
    <path fill={G} d="M2 50l26-11 28 10 26-7v12H2z" />
  </g>,
  <g key="darea">
    <path fill="#e4e4e4" d="M42 2h2v52h-2z" />
    <path fill="#bbc2c8" d="M4 14l9-8 13 29 10-21 4 9v29H4zM46 12l20 17 14-7v30H46z" />
    <path fill="#d9ccc1" d="M4 32l10-10 12 20 10-17 4 5v22H4zM46 20l20 12 14-3v23H46z" />
    <path fill={G} d="M4 44l10-8 12 14 10-6 4 2v6H4zM46 28l20 9 14-2v17H46z" />
  </g>,
  <g key="combo">
    <path fill="none" strokeWidth="2" stroke={T} d="M2 9h6M2 15h6M2 21h6M2 27h6M2 33h6M2 39h6M2 45h6" />
    <path fill="none" strokeWidth="2" stroke="#b9c3ca" d="M76 9h6M76 21h6M76 34h6M76 47h6" />
    <path fill={B} d="M14 28h8v26h-8zM26 20h8v34h-8zM38 36h8v18h-8zM50 6h8v48h-8zM62 28h8v26h-8z" />
    <path d="M49 19l6-7 6 7" fill="none" stroke="#fff" strokeWidth="5" />
    <path d="M16 20L28 7l15 18 12-11 13 11" fill="none" stroke="#cfbfb4" strokeWidth="2" />
  </g>,
  <g key="scatter" fill="none" strokeWidth="2.200">
    <g stroke="#b3bec6">
      <circle cx="9" cy="47" r="4.300" />
      <circle cx="21" cy="32" r="4.300" />
      <circle cx="33" cy="26" r="4.300" />
      <circle cx="49" cy="21" r="4.300" />
      <circle cx="63" cy="7" r="4.300" />
      <circle cx="61" cy="27" r="4.300" />
    </g>
    <path stroke={T} d="M16 45h10M21 40v10M26 39h10M31 34v10M42 35h10M47 30v10M36 11h10M41 6v10M66 19h10M71 14v10" />
  </g>,
  <path
    key="histogram"
    fill="#bdbdbd"
    d="M7 50h6v4H7zM15 42h6v12h-6zM23 22h6v32h-6zM31 10h6v44h-6zM39 6h6v48h-6zM47 10h6v44h-6zM55 22h6v32h-6zM63 42h6v12h-6zM71 50h6v4h-6z"
  />,
  <g key="boxplot">
    <path d="M15 17v28M12 17h6M12 45h6M33 15v32M30 15h6M30 47h6M51 13v34M48 13h6M48 47h6M69 9v38M66 9h6M66 47h6" stroke="#b3b3b3" strokeWidth="2" />
    <path fill="#d8d8d8" d="M10 26h10v6H10zM28 26h10v8H28zM46 18h10v10H46zM64 14h10v12H64z" />
    <path fill="#bdbdbd" d="M10 32h10v6H10zM28 34h10v8H28zM46 28h10v8H46zM64 26h10v8H64z" />
  </g>,
  <g key="gantt">
    <path fill="#3274a1" d="M2 7h12v10H2zM50 7h2v10h-2zM21 23h6v10h-6zM33 23h25v10H33zM42 39h8v10h-8z" />
    <path fill="#e1812c" d="M38 7h3v10h-3zM58 7h10v10H58zM2 23h7v10H2zM6 39h12v10H6z" />
    <path fill="#3a923a" d="M11 23h4v10h-4zM65 23h11v10H65zM20 39h2v10h-2z" />
    <path fill="#c03d3e" d="M33 7h3v10h-3zM24 39h4v10h-4zM62 39h6v10h-6z" />
  </g>,
  <g key="bullet">
    <path fill="#f4f6f7" d="M2 6h80v10H2zM2 22h80v10H2zM2 38h80v10H2z" />
    <path fill="#e9edf0" d="M2 6h62v10H2zM2 22h62v10H2zM2 38h56v10H2z" />
    <path fill="#dde1e4" d="M2 6h52v10H2zM2 22h50v10H2zM2 38h30v10H2z" />
    <path fill={B} d="M2 8h36v6H2zM2 24h62v6H2zM2 40h38v6H2z" />
    <path fill="#8a8a8a" d="M46 6h2v10h-2zM58 22h2v10h-2zM70 38h2v10h-2z" />
  </g>,
  <g key="bubbles">
    <circle cx="23" cy="25" r="16" fill="#c6ccd6" />
    <circle cx="50" cy="15" r="9" fill="#e0d5cb" />
    <circle cx="49" cy="35" r="8" fill="#cdbfb6" />
    <circle cx="68" cy="28" r="9" fill="#c8d1c7" />
    <circle cx="36" cy="45" r="5" fill="#c8d1c7" />
  </g>,
];

function ShowMe() {
  return (
    <div className="absolute top-[442px] left-[1863px] flex h-[811px] w-[338px] flex-col overflow-hidden rounded-t-[12px] border-[3px] border-[#9b9b9b] bg-white shadow-[0_10px_24px_rgba(0,0,0,.45)]">
      <div className="flex h-[45px] shrink-0 items-center border-b-2 border-[#b8c2cc] bg-[#e0ecf6]">
        <BarsLogo className="ml-[86px]" />
        <span className="ml-[13px] w-[154px] text-[26px] tracking-[0px] text-black">Show Me</span>
        <svg className="ml-[15px]" width="16" height="16" viewBox="0 0 16 16">
          <path d="M1.500 1.500l13 13M14.500 1.500l-13 13" stroke="#4c5a70" strokeWidth="2.400" />
        </svg>
      </div>
      <div className="mt-[12px] grid grid-cols-[84px_84px_84px] gap-x-[22px] gap-y-[12px] pl-[18px]">
        {thumbs.map((t, i) => (
          <div key={i} className={i === 21 ? "-m-[2px] rounded-[5px] bg-[#55a9fd] p-[2px] shadow-[0_0_5px_#55a9fd]" : ""}>
            <svg className="block" width="84" height="56" viewBox="0 0 84 56">
              <path d={i === 21 ? "M2 2h80v52H2z" : "M1 1h82v54H1z"} fill="#fff" stroke={i === 21 ? "none" : "#e4e4e4"} strokeWidth="2" />
              {t}
            </svg>
          </div>
        ))}
      </div>
      <div className="mt-[12px] pl-[13px] text-[22px] leading-[32px] tracking-[-0.3px] whitespace-nowrap text-black">
        <div>
          For a <b className="tracking-[-0.2px]">Gantt</b> view try
        </div>
        <div className="flex items-center pl-[13px]">
          1 date
          <svg className="mb-[4px] ml-[9px]" width="21" height="22" viewBox="0 0 21 22">
            <path d="M1 3h19v18H1zM1 9h19M7 0v5M14 0v5" fill="none" stroke="#66748a" strokeWidth="2" />
          </svg>
        </div>
        <div className="flex items-center pl-[13px]">
          1 or more&nbsp;<span className="h-[27px] bg-[#dbe9fb] leading-[27px] tracking-[-1.05px]">dimensions</span>
        </div>
        <div className="flex items-center pl-[13px]">
          0 to 2&nbsp;<span className="ml-[2px] h-[27px] bg-[#d0f0dc] leading-[27px] tracking-[-1.1px]">measures</span>
        </div>
      </div>
    </div>
  );
}

/* ----------------------------------------------------- sheets and status */

function SheetTabs() {
  return (
    <div className="flex h-[61px] shrink-0 border-t-2 border-[#a5a8a6] bg-[#efefef]">
      <div className="-mt-[2px] ml-[5px] flex h-[54px] w-[164px] items-center justify-center rounded-b-[12px] border-2 border-t-0 border-[#a3a3a3] bg-white pb-[1px] text-[25px] font-bold tracking-[0.8px] text-[#222]">
        Sheet 2
      </div>
      <div className="ml-[14px] flex h-[52px] w-[64px] items-center justify-center rounded-b-[12px] border-2 border-t-0 border-[#a3a3a3] bg-[#e6e6e6]">
        <svg width="30" height="27" viewBox="0 0 30 27">
          <path d="M14 5h15v20H1v-11" fill="none" stroke="#66748a" strokeWidth="2" />
          <path fill="#66748a" d="M7 18h4v7H7zM13 11h4v14h-4zM20 14h4v11h-4z" />
          <path d="M6 0v12M0 6h12" stroke="#3f6fb5" strokeWidth="4" />
        </svg>
      </div>
      <div className="ml-[14px] flex h-[52px] w-[64px] items-center justify-center rounded-b-[12px] border-2 border-t-0 border-[#a3a3a3] bg-[#e6e6e6]">
        <svg width="30" height="27" viewBox="0 0 30 27">
          <path d="M14 5h15v20H1V14M15 5v20M1 15h28" fill="none" stroke="#66748a" strokeWidth="2" />
          <path d="M6 0v12M0 6h12" stroke="#3f6fb5" strokeWidth="4" />
        </svg>
      </div>
    </div>
  );
}

const Divider = ({ className }: { className: string }) => <div className={"h-full border-l-2 border-[#d6d6d6] " + className} />;

function StatusBar() {
  return (
    <div className="flex h-[38px] shrink-0 items-center rounded-b-[8px] border-t-2 border-[#8f8f8f] bg-[#ececec] pl-[7px] text-[22px] tracking-[0.75px] text-black">
      <span className="w-[175px] pb-[2px]">8608 marks</span>
      <span className="pb-[2px]">6956 rows by 1 column</span>
      <Divider className="ml-auto w-[253px]" />
      <Divider className="w-[55px]" />
      <Divider className="w-[54px]" />
      <Divider className="w-[94px]" />
      <div className="flex h-full w-[142px] items-center justify-between border-l-2 border-[#d6d6d6] pr-[17px] pl-[15px]">
        <svg width="12" height="14" viewBox="0 0 12 14">
          <path d="M0 0h2v14H0zM12 0v14L3 7z" fill="#a9a9a9" />
        </svg>
        <svg width="9" height="14" viewBox="0 0 9 14">
          <path d="M9 0v14L0 7z" fill="#a9a9a9" />
        </svg>
        <svg width="9" height="14" viewBox="0 0 9 14">
          <path d="M0 0v14l9-7z" fill="#a9a9a9" />
        </svg>
        <svg width="12" height="14" viewBox="0 0 12 14">
          <path d="M10 0h2v14h-2zM0 0v14l9-7z" fill="#a9a9a9" />
        </svg>
      </div>
      <div className="flex h-full w-[45px] items-center border-l-2 border-[#d6d6d6] pl-[16px]">
        <svg width="11" height="14" viewBox="0 0 11 14">
          <path d="M5.500 0L11 6H0zM0 8h11l-5.500 6z" fill="#42526c" />
        </svg>
      </div>
    </div>
  );
}

/* ----------------------------------------------------------------- dock */

const gradients = (
  <svg width="0" height="0" className="absolute">
    <defs>
      <linearGradient id="g-finder" x1="0" y1="0" x2="0" y2="1">
        <stop offset="0" stopColor="#bcd6f8" />
        <stop offset="1" stopColor="#3f76cf" />
      </linearGradient>
      <linearGradient id="g-finder2" x1="0" y1="0" x2="0" y2="1">
        <stop offset="0" stopColor="#e8f1fd" />
        <stop offset="1" stopColor="#a9bfe6" />
      </linearGradient>
      <linearGradient id="g-steel" x1="0" y1="0" x2="1" y2="1">
        <stop offset="0" stopColor="#8e8e8e" />
        <stop offset="0.350" stopColor="#e8e8e8" />
        <stop offset="0.600" stopColor="#a2a2a2" />
        <stop offset="1" stopColor="#dcdcdc" />
      </linearGradient>
      <linearGradient id="g-blue" x1="0" y1="0" x2="0" y2="1">
        <stop offset="0" stopColor="#2a5f9f" />
        <stop offset="0.400" stopColor="#17559c" />
        <stop offset="1" stopColor="#2fb4f2" />
      </linearGradient>
      <linearGradient id="g-safari" x1="0" y1="0" x2="0" y2="1">
        <stop offset="0" stopColor="#2f72c8" />
        <stop offset="1" stopColor="#5fd0f8" />
      </linearGradient>
      <linearGradient id="g-bubble" x1="0" y1="0" x2="0" y2="1">
        <stop offset="0" stopColor="#2f7fe4" />
        <stop offset="1" stopColor="#6cc8fb" />
      </linearGradient>
      <linearGradient id="g-orange" x1="0" y1="0" x2="0" y2="1">
        <stop offset="0" stopColor="#f8a52a" />
        <stop offset="1" stopColor="#f0701e" />
      </linearGradient>
      <linearGradient id="g-sunset" x1="0" y1="0" x2="0" y2="1">
        <stop offset="0" stopColor="#5a2a0a" />
        <stop offset="0.600" stopColor="#f19a1c" />
        <stop offset="1" stopColor="#8a3f0a" />
      </linearGradient>
      <linearGradient id="g-leather" x1="0" y1="0" x2="1" y2="1">
        <stop offset="0" stopColor="#dfb577" />
        <stop offset="1" stopColor="#b98640" />
      </linearGradient>
      <linearGradient id="g-word" x1="0" y1="0" x2="0" y2="1">
        <stop offset="0" stopColor="#1f90cc" />
        <stop offset="1" stopColor="#2fb6ec" />
      </linearGradient>
      <linearGradient id="g-ppt" x1="0" y1="0" x2="0" y2="1">
        <stop offset="0" stopColor="#f2572a" />
        <stop offset="1" stopColor="#dc3c14" />
      </linearGradient>
      <radialGradient id="g-lens">
        <stop offset="0" stopColor="#2a66b0" />
        <stop offset="0.550" stopColor="#16365e" />
        <stop offset="1" stopColor="#111" />
      </radialGradient>
      <pattern id="mesh" width="6" height="6" patternUnits="userSpaceOnUse">
        <path fill="#3a3a3c" d="M0 0h6v6H0z" />
        <path d="M0 0l6 6M6 0L0 6" stroke="#b6b6b8" strokeWidth="1.300" />
      </pattern>
    </defs>
  </svg>
);

const dockIcons: { name: string; glow: string; running?: boolean; art: React.ReactNode }[] = [
  {
    name: "Finder",
    glow: "#7da3e6",
    running: true,
    art: (
      <g>
        <path fill="url(#g-finder)" d="M11 29h46q-8 22-13 35h12q0 18 2 26H11z" />
        <path fill="url(#g-finder2)" d="M57 29h28v61H58q-2-8-2-26H44q5-13 13-35z" />
        <path d="M29 38v9M63 38v9" stroke="#123" strokeWidth="4" />
        <path d="M59 19Q47 45 43 64h13q-1 24 2 44M22 71q26 18 52 0" fill="none" stroke="#111" strokeWidth="3.500" />
      </g>
    ),
  },
  {
    name: "Launchpad",
    glow: "#cfcfcf",
    art: (
      <g>
        <circle cx="47" cy="62" r="41" fill="url(#g-steel)" stroke="#9a9a9a" strokeWidth="1.500" />
        <path d="M69 38c-16 0-28 8-34 22l-12 6 3 5 7-2 9 9-2 10 7 4 4-15c12-8 18-20 18-39z" fill="#3c3c3e" />
        <circle cx="58" cy="53" r="5" fill="#cfcfcf" />
        <path d="M29 77c-8 2-8 8-7 14 6 1 12-1 13-9" fill="none" stroke="#3c3c3e" strokeWidth="4" />
      </g>
    ),
  },
  {
    name: "Calendar",
    glow: "#e8e8e8",
    art: (
      <g transform="rotate(-9 47 62)">
        <path fill="#4a4a4a" d="M12 34h73v70H12z" />
        <path fill="#cfcfcf" d="M12 34h71v67H12z" />
        <path fill="#f8f8f8" d="M11 28h71v60l-12 9H11z" />
        <path fill="#c9444a" d="M11 28h71v20H11z" />
        <path d="M26 16v20M62 16v20" stroke="#9b9b9b" strokeWidth="4" strokeLinecap="round" />
        <text x="15" y="44" fontSize="14" fill="#fff" fontWeight="700" textLength="22" lengthAdjust="spacingAndGlyphs" fontFamily="Liberation Sans">SEP</text>
        <text x="24" y="87" fontSize="44" fontWeight="700" textLength="42" lengthAdjust="spacingAndGlyphs" fill="#2c2c2c" fontFamily="Liberation Sans">26</text>
      </g>
    ),
  },
  {
    name: "Mission Control",
    glow: "#8a8a90",
    art: (
      <g>
        <rect x="4" y="26" width="85" height="74" rx="7" fill="#55565b" stroke="#3a3b40" strokeWidth="1.500" />
        <path fill="#eee" d="M12 33h35v4H12zM54 45h27v4H54zM19 65h30v6H19z" />
        <path fill="url(#g-sunset)" d="M12 37h35v19H12z" />
        <path fill="#2e8f2c" d="M54 49h27v29H54z" />
        <path fill="#79c043" d="M57 60q10-8 18 2l-3 10H58z" />
        <path fill="#234d2b" d="M19 71h30v21H19z" />
        <path fill="#d98ac6" d="M24 80l10-6 11 7-6 8H28z" />
        <circle cx="30" cy="56" r="5" fill="#b9bec8" />
        <circle cx="68" cy="79" r="5" fill="#8fc6ee" />
        <path d="M30 88h9v10h-9z" fill="#cfe0f5" />
      </g>
    ),
  },
  {
    name: "Safari",
    glow: "#79e0e8",
    art: (
      <g>
        <circle cx="40" cy="20" r="4" fill="none" stroke="#a9a9a9" strokeWidth="2" />
        <circle cx="47" cy="64" r="39" fill="url(#g-steel)" stroke="#555" strokeWidth="1.500" />
        <circle cx="47" cy="64" r="32" fill="url(#g-safari)" stroke="#666" strokeWidth="1" />
        <path fill="#dff1fb" d="M47 36l5 20 20 8-20 8-5 20-5-20-20-8 20-8z" opacity=".85" />
        <path fill="#e0532d" d="M65 38L51 69l-8-7z" />
        <path fill="#f1f1f1" d="M31 92l12-30 8 7z" />
      </g>
    ),
  },
  {
    name: "Apps",
    glow: "#f0f0f0",
    art: (
      <g>
        <rect x="13" y="28" width="69" height="70" rx="5" fill="#f8f8f8" stroke="#c9c9c9" strokeWidth="1.500" />
        <path fill="#ee4437" d="M31 45h9v9h-9zM43 45h9v9h-9zM55 45h9v9h-9z" />
        <path fill="#17a05e" d="M31 58h9v9h-9zM31 70h9v9h-9zM43 70h9v9h-9z" />
        <path fill="#1a94e6" d="M43 58h9v9h-9z" />
        <path fill="#fcbd23" d="M55 58h9v9h-9zM55 70h9v9h-9z" />
      </g>
    ),
  },
  {
    name: "Mail",
    glow: "#8fb6ea",
    art: (
      <g transform="rotate(-7 47 60)">
        <path fill="#fff" stroke="#f4f4f4" strokeWidth="3" strokeDasharray="3 2.500" d="M14 22h66v76H14z" />
        <path fill="#6f9ce0" d="M20 28h54v64H20z" />
        <path fill="#3d2c1f" d="M35 32l8-1c6 8 7 18 8 27 8-3 14 0 14 4l-6 3c4 6 8 14 10 23-8 0-18-3-26-11l-6-12c-2-4 1-6 3-8-5-8-7-16-5-25z" />
        <path fill="#a98357" d="M48 62l8 4 8 16-12-6z" />
        <circle cx="26" cy="86" r="20" fill="none" stroke="#4c6ba8" strokeOpacity=".5" strokeWidth="1.500" />
        <circle cx="26" cy="86" r="15" fill="none" stroke="#4c6ba8" strokeOpacity=".5" strokeWidth="1.500" />
      </g>
    ),
  },
  {
    name: "Contacts",
    glow: "#eac07a",
    art: (
      <g transform="rotate(-8 47 60)">
        <path fill="#f4f4f4" d="M74 26h8v74h-8z" />
        <path fill="#333" d="M12 26h10v78H12z" />
        <path fill="#4b3a34" d="M12 24h12v76H12z" />
        <path fill="url(#g-leather)" d="M22 24h52q4 0 4 4v68q0 4-4 4H22z" />
        <path fill="#fff" d="M14 100h62v3H14z" />
        <text x="30" y="75" fontSize="40" fill="#f7ead2" fontFamily="Liberation Sans">@</text>
      </g>
    ),
  },
  {
    name: "Reminders",
    glow: "#d8d8d8",
    art: (
      <g transform="rotate(-7 47 60)">
        <rect x="12" y="26" width="68" height="78" rx="7" fill="#24262a" />
        <rect x="14" y="24" width="62" height="76" rx="5" fill="#eeeeea" stroke="#333" strokeWidth="2" />
        <path d="M15 43h60M15 62h60M15 81h60" stroke="#b6b6b0" strokeWidth="1.500" />
        <path d="M33 26v72" stroke="#e2a7a0" strokeWidth="1" />
        <path d="M20 33l4 5 5-11M20 52l4 5 5-11M20 71l4 5 5-11M20 90l4 5 5-11" fill="none" stroke="#222" strokeWidth="3" />
        <path fill="#bcbcb8" d="M40 31h22v6H40zM40 50h26v6H40zM40 69h22v6H40zM40 88h26v6H40z" />
      </g>
    ),
  },
  {
    name: "Notes",
    glow: "#efe87a",
    art: (
      <g transform="rotate(-7 47 60)">
        <path fill="#f6ee8f" d="M12 26h66v76H12z" />
        <path fill="#5c3d28" d="M12 20h66v10H12z" />
        <path d="M12 44h66M12 53h66M12 62h66M12 71h66M12 80h66M12 89h66" stroke="#c9bf66" strokeWidth="1" />
        <path
          d="M22 42q10-5 18 0t16-1M22 51q8-4 16 0t14-1M22 60q12-5 30 0M24 77q12-5 18 0t20-1M24 86q12-5 30 0M24 95q10-5 24 0"
          fill="none"
          stroke="#4a431e"
          strokeWidth="1.500"
          strokeDasharray="7 1.500 3 1.500"
        />
        <path d="M19 32v70" stroke="#d9a06a" strokeWidth="1" />
      </g>
    ),
  },
  {
    name: "Maps",
    glow: "#f4e6a0",
    art: (
      <g>
        <g transform="rotate(-8 44 62)">
          <path fill="#fff" d="M10 26h68v78H10z" />
          <path fill="#e9e1cf" d="M14 30h60v70H14z" />
          <path fill="#7bbf4c" d="M14 32h42v14H14z" />
          <path fill="#f2b8cd" d="M62 30h12v14H62z" />
          <path d="M14 54h46v48" fill="none" stroke="#2f86dc" strokeWidth="6" />
          <path d="M14 82q12-8 22 2t14 16" fill="none" stroke="#f7c62f" strokeWidth="8" />
          <path fill="#3464b4" d="M20 60q11 5 22 0 4 16-11 24-15-8-11-24z" />
          <path fill="#d2383c" d="M20 60q11 5 22 0v5H20z" />
          <text x="22" y="77" fontSize="11" fontWeight="700" fill="#fff" fontFamily="Liberation Sans">280</text>
        </g>
        <circle cx="69" cy="86" r="19" fill="#ececec" stroke="#b5b5b5" strokeWidth="1.500" />
        <path fill="#d92b2b" d="M68 71l4 14-8 1z" />
        <path fill="#8a8a8a" d="M64 86l8-1-2 14z" />
      </g>
    ),
  },
  {
    name: "Messages",
    glow: "#7fd6e6",
    art: (
      <g>
        <path fill="url(#g-bubble)" stroke="#1d5fc0" strokeWidth="1" d="M45 22c24 0 41 16 41 37S69 96 45 96c-5 0-10-1-14-2-5 6-14 8-22 7 6-4 8-9 8-15C8 80 4 70 4 59c0-21 17-37 41-37z" />
        <path fill="#e8f0f8" stroke="#b4c4d4" strokeWidth="1" d="M63 65c15 0 26 10 26 22 0 6-3 12-7 15 0 5 2 8 5 10-6 1-11-1-14-5-3 1-6 1-10 1-15 0-26-9-26-21s11-22 26-22z" />
        <g fill="#6f8fae">
          <circle cx="51" cy="87" r="4" />
          <circle cx="64" cy="87" r="4" />
          <circle cx="76" cy="87" r="4" />
        </g>
      </g>
    ),
  },
  {
    name: "FaceTime",
    glow: "#d8d8d8",
    art: (
      <g>
        <rect x="6" y="34" width="57" height="57" rx="9" fill="#cfcfcf" stroke="#9a9a9a" strokeWidth="1.500" />
        <path fill="#bdbdbd" stroke="#999" d="M64 62l24-24v50z" />
        <circle cx="34" cy="62" r="20" fill="#222" stroke="#666" strokeWidth="2" />
        <circle cx="34" cy="62" r="15" fill="url(#g-lens)" />
        <circle cx="28" cy="55" r="4" fill="#8fb6e4" opacity=".7" />
      </g>
    ),
  },
  {
    name: "Photo Booth",
    glow: "#e06a5a",
    art: (
      <g>
        <path fill="#d5d5d5" d="M4 18h67v90H4z" />
        <path fill="#dc2222" d="M8 26h59v54H8z" />
        <path d="M13 28v52M21 28v52M29 28v52M37 28v52M45 28v52M53 28v52M61 28v52" stroke="#a81014" strokeWidth="2" />
        <path fill="#ececec" d="M8 80h59v24H8z" />
        <path fill="#f6f6f6" d="M4 17h67v8H4z" />
        <path d="M17 80h18M20 80l-5 24M26 80v18M32 80l5 24M17 92h18" stroke="#3e2a1e" strokeWidth="3" />
        <g transform="rotate(20 66 76)">
          <path fill="#fff" d="M55 44h24v66H55z" />
          <path fill="#5a3c34" d="M58 47h18v18H58zM58 68h18v18H58zM58 89h18v18H58z" />
          <circle cx="67" cy="56" r="6" fill="#d9a58c" />
          <circle cx="67" cy="77" r="6" fill="#d9a58c" />
          <circle cx="67" cy="98" r="6" fill="#d9a58c" />
        </g>
      </g>
    ),
  },
  {
    name: "iPhoto",
    glow: "#b4b4c0",
    art: (
      <g>
        <g transform="rotate(-8 44 60)">
          <path fill="#fff" d="M8 24h72v74H8z" />
          <path fill="url(#g-sunset)" d="M12 28h64v66H12z" />
          <path fill="#1c0f08" d="M46 44c-12-10-24-6-28 4 8-4 16-4 24 0-8 4-12 10-12 16 6-4 12-10 16-14 0 14-4 30-8 42h8c4-16 4-28 4-42 8 2 14 8 18 14 2-8-4-16-12-18 8-2 14 0 18 4-4-10-18-14-28-6z" />
        </g>
        <rect x="23" y="72" width="65" height="42" rx="3" fill="#64748a" stroke="#3f4c5c" strokeWidth="1.500" />
        <path fill="#8b9aae" d="M24 73h63v6H24z" />
        <circle cx="63" cy="95" r="17" fill="#c4c8cc" stroke="#888" />
        <circle cx="63" cy="95" r="10" fill="#23262c" />
        <circle cx="63" cy="95" r="4" fill="#2f4fae" />
      </g>
    ),
  },
  {
    name: "iTunes",
    glow: "#6ab0ea",
    art: (
      <g>
        <circle cx="47" cy="62" r="41" fill="#d4dae2" />
        <circle cx="47" cy="62" r="38" fill="url(#g-blue)" />
        <path fill="#f1f4f8" d="M36 44l24-7v41a8.500 8.500 0 1 1-5-8V50l-14 4v30a8.500 8.500 0 1 1-5-8z" />
      </g>
    ),
  },
  {
    name: "iBooks",
    glow: "#f3b46a",
    art: (
      <g>
        <circle cx="47" cy="62" r="41" fill="#f2f2f2" />
        <circle cx="47" cy="62" r="37" fill="url(#g-orange)" />
        <path fill="#fff" stroke="#c85a12" strokeWidth="1" d="M47 46c-6-5-16-6-24-4v42c8-2 18 0 24 6 6-6 16-8 24-6V42c-8-2-18-1-24 4z" />
        <path d="M47 48v38" stroke="#ef8424" strokeWidth="2" />
      </g>
    ),
  },
  {
    name: "App Store",
    glow: "#7fd2f2",
    art: (
      <g>
        <circle cx="47" cy="62" r="41" fill="#dfe3e8" />
        <circle cx="47" cy="62" r="38" fill="url(#g-blue)" />
        <path d="M23 70h48" stroke="#eef3f8" strokeWidth="7" />
        <path d="M51 38L27 84M43 38l24 46" stroke="#f6f9fc" strokeWidth="6" strokeLinecap="round" />
        <circle cx="73" cy="38" r="16" fill="#e02229" stroke="#fff" strokeWidth="2.500" />
        <text x="73" y="45" fontSize="20" textAnchor="middle" fill="#fff" fontFamily="Liberation Sans">10</text>
      </g>
    ),
  },
  {
    name: "System Preferences",
    glow: "#a8a8a8",
    art: (
      <g>
        <rect x="5" y="26" width="84" height="74" rx="4" fill="#d7d7d7" stroke="#999" strokeWidth="1.500" />
        <path fill="#5a5c60" d="M11 33h72v60H11z" />
        <circle cx="47" cy="64" r="25" fill="none" stroke="#dedede" strokeWidth="8" strokeDasharray="4 3.140" />
        <circle cx="47" cy="64" r="20" fill="none" stroke="#d4d4d4" strokeWidth="7" />
        <circle cx="47" cy="64" r="7" fill="#e4e4e4" />
        <path d="M47 64V44M47 64l17 10M47 64L30 74" stroke="#d4d4d4" strokeWidth="4" />
        <path d="M12 80a14 14 0 0 1 14 13M82 80a14 14 0 0 0-14 13" fill="none" stroke="#c4c4c4" strokeWidth="7" />
      </g>
    ),
  },
  {
    name: "VLC",
    glow: "#f6c46a",
    art: (
      <g>
        <path fill="#f2921c" d="M16 73h62l9 32H7z" />
        <path fill="#d9780f" d="M7 103h80v4H7z" />
        <path fill="#f07e13" d="M41 19q6-3 11 0l19 68q-24 14-48 0z" />
        <path fill="#dfe3e6" d="M37.500 32h17.500l5 18q-14 5-27 0zM28 67q19 8 37 0l5 17q-22 10-46 0z" />
      </g>
    ),
  },
  {
    name: "Chrome",
    glow: "#a9e08a",
    running: true,
    art: (
      <g>
        <circle cx="47" cy="62" r="40" fill="#f9cf2e" />
        <path fill="#dc4437" d="M12.400 42a40 40 0 0 1 69.200 0H47z" />
        <path fill="#dc4437" d="M12.400 42A40 40 0 0 1 47 22v20L30 72z" />
        <path fill="#4caf50" d="M12.400 42a40 40 0 0 0 32 60l20-30H30z" />
        <circle cx="47" cy="62" r="18" fill="#f2f2f2" />
        <circle cx="47" cy="62" r="14.500" fill="#3a7cc4" />
      </g>
    ),
  },
  {
    name: "Terminal",
    glow: "#c4c4c4",
    running: true,
    art: (
      <g>
        <path fill="#c0c0c0" stroke="#8c8c8c" d="M5 26h84v73H5z" />
        <path fill="#1b1b1c" d="M11 32h72v61H11z" />
        <path fill="#3a3a3c" d="M11 72q30-8 72-26V32H11z" opacity=".6" />
        <path d="M16 38l12 6-12 6M29 53h12" fill="none" stroke="#fff" strokeWidth="3.500" />
      </g>
    ),
  },
  {
    name: "Xcode",
    glow: "#7ad0ee",
    art: (
      <g>
        <path fill="#5ea6ee" stroke="#3f86d4" d="M4 38l68-9 16 57-76 14z" />
        <path d="M22 88l24-46M44 42l28 42M20 66l46-6M20 74l50-7" stroke="#cfe5fb" strokeWidth="2.500" />
        <path d="M56 58L43 102" stroke="#161616" strokeWidth="11" />
        <path d="M66 30L57 58" stroke="#c9ced4" strokeWidth="6" />
        <path fill="#d6d9dd" stroke="#777" d="M40 28q18-14 34-4l6 6 10-2v10l-10 2-14-8q-12-6-26-4z" />
      </g>
    ),
  },
  {
    name: "Word",
    glow: "#5fd0f0",
    art: (
      <path d="M14 32l12 60q3 4 6 0L49 52q1-4 3 0l12 38q3 4 5 0l12-53" fill="none" stroke="url(#g-word)" strokeWidth="14" strokeLinecap="round" strokeLinejoin="round" />
    ),
  },
  {
    name: "PowerPoint",
    glow: "#f4a88a",
    art: (
      <path d="M26 30h22c32 0 32 42 2 42H29V98" fill="none" stroke="url(#g-ppt)" strokeWidth="17" strokeLinecap="round" strokeLinejoin="round" />
    ),
  },
  {
    name: "Tableau",
    glow: "#f2f2f2",
    running: true,
    art: (
      <g>
        <path fill="#f6f6f6" stroke="#c4c4c4" d="M8 22h80v80H8z" />
        <path d="M18 80h27M31.500 67v26" stroke="#1f5f95" strokeWidth="4.500" />
        <path d="M49 65h21M59.500 55v20" stroke="#2f7fa6" strokeWidth="3" />
        <path d="M24 47h14M31 41v13" stroke="#2a4a86" strokeWidth="2.500" />
        <path d="M46 41h14M53 35v12" stroke="#e08a2f" strokeWidth="2.500" />
        <path d="M68 34h13M74.500 28v12" stroke="#a92f36" strokeWidth="2.500" />
      </g>
    ),
  },
];

function Dock() {
  return (
    <div className="relative h-[132px] shrink-0 overflow-hidden bg-[linear-gradient(90deg,#16131f_0%,#121a3c_7%,#15121e_12%,#1a1622_16%,#2a2d36_24%,#3a3a3a_30%,#2e3646_38%,#161616_43%,#1b1a1e_46%,#3a3f52_50%,#23263a_56%,#1a1834_62%,#1d1c46_68%,#1b1a36_78%,#2a2220_84%,#2a1c1c_90%,#3a2420_94%,#14121e_100%)]">
      {gradients}
      <svg className="absolute inset-0" width="2880" height="132" viewBox="0 0 2880 132">
        <defs>
          <linearGradient id="shelf" x1="0" y1="0" x2="0" y2="1">
            <stop offset="0" stopColor="#8f8f98" />
            <stop offset="1" stopColor="#dcdce0" />
          </linearGradient>
        </defs>
        <path fill="url(#shelf)" d="M92 58H2792q6 0 8 6l32 58q2 3 2 4H47q0-2 2-5L82 65q3-7 10-7z" />
        <path fill="#fff" d="M48 124h2785v2H47z" />
        <path fill="#9d9d9d" d="M47 126h2786v6H50z" />
        <path d="M2577 66l18 50" stroke="#8c8c90" strokeWidth="2" />
      </svg>
      <div className="relative flex h-full pl-[88px]">
        {dockIcons.map((d) => (
          <div key={d.name} className="relative w-[95.200px] shrink-0">
            <div
              className="absolute bottom-[8px] left-[14px] h-[12px] w-[66px] rounded-full opacity-50 blur-[6px]"
              style={{ backgroundColor: d.glow }}
            />
            {d.running && <div className="absolute bottom-0 left-[36px] h-[6px] w-[24px] rounded-[2px] bg-white shadow-[0_0_8px_3px_#a9dcf8]" />}
            <svg className="relative block drop-shadow-[0_2px_2px_rgba(0,0,0,.4)]" width="95" height="132" viewBox="0 0 95 132">
              {d.art}
            </svg>
          </div>
        ))}
        <svg className="ml-[66px] drop-shadow-[0_2px_2px_rgba(0,0,0,.4)]" width="62" height="132" viewBox="0 0 62 132">
          <path fill="#d2d2d2" stroke="#a8a8a8" d="M7 18h30l14 16v20H7z" />
          <path fill="#f9f9f9" stroke="#cfcfcf" d="M1 26h40q4 16 18 20v57H1z" />
          <path fill="#d8d8d8" d="M41 24q2 18 18 21-8-6-10-17z" />
        </svg>
        <svg className="ml-[28px]" width="72" height="132" viewBox="0 0 72 132">
          <path fill="url(#mesh)" d="M3 30h66l-7 70q-26 10-52 0z" />
          <path fill="#c9c9d2" stroke="#77777f" d="M9 90q27 10 54 0l-1 10q-26 12-52 0z" />
          <ellipse cx="36" cy="32" rx="33" ry="12" fill="#3a3a3c" stroke="#d9d9e2" strokeWidth="5" />
          <path fill="#eaeaea" d="M16 36l8-10 10 4 8-6 12 10-8 6H20z" />
        </svg>
      </div>
    </div>
  );
}

/* ------------------------------------------------------------------ app */

export default function App() {
  return (
    <div className="relative flex h-[1800px] w-[2880px] flex-col overflow-hidden bg-[#1a1a22] font-['Lucida_Grande','Noto_Sans',sans-serif]">
      <MenuBar />
      <TitleBar />
      <Toolbar />
      <div className="flex h-[1442px] shrink-0 bg-[#ececec]">
        <DataPane />
        <div className="flex grow flex-col border-t-2 border-l-2 border-[#8a8a8a] bg-[#e6e6e6]">
          <div className="flex h-[1378px] pl-[12px]">
            <div className="w-[321px] shrink-0 pt-[14px]">
              <Card title="Pages" className="h-[111px]" />
              <Card title="Filters" className="mt-[13px] h-[142px]" />
              <MarksCard />
            </div>
            <div className="flex grow flex-col gap-[12px] pt-[14px] pr-[16px]">
              <Shelf
                label="Columns"
                pill="Year"
                green
                icon={
                  <svg width="26" height="26" viewBox="0 0 26 26">
                    <path fill="#66748a" d="M2 0h6v6H2zM10 0h6v6h-6zM18 0h6v6h-6z" />
                    <path fill="#adb4bc" d="M2 8h6v18H2zM10 8h6v18h-6zM18 8h6v18h-6z" />
                  </svg>
                }
              />
              <Shelf
                label="Rows"
                pill="Athlete"
                icon={
                  <svg width="26" height="22" viewBox="0 0 26 22">
                    <path fill="#66748a" d="M0 0h6v6H0zM0 8h6v6H0zM0 16h6v6H0z" />
                    <path fill="#adb4bc" d="M8 0h18v6H8zM8 8h18v6H8zM8 16h18v6H8z" />
                  </svg>
                }
              />
              <div className="flex">
                <Chart />
                <div className="ml-[5px] flex h-[1226px] w-[28px] flex-col items-center bg-[#f2f2f2] pt-[50px]">
                  <div className="h-[16px] w-[16px] rounded-full bg-[#bdbdbd]" />
                </div>
              </div>
            </div>
          </div>
          <SheetTabs />
        </div>
      </div>
      <StatusBar />
      <Dock />
      <ShowMe />
    </div>
  );
}
